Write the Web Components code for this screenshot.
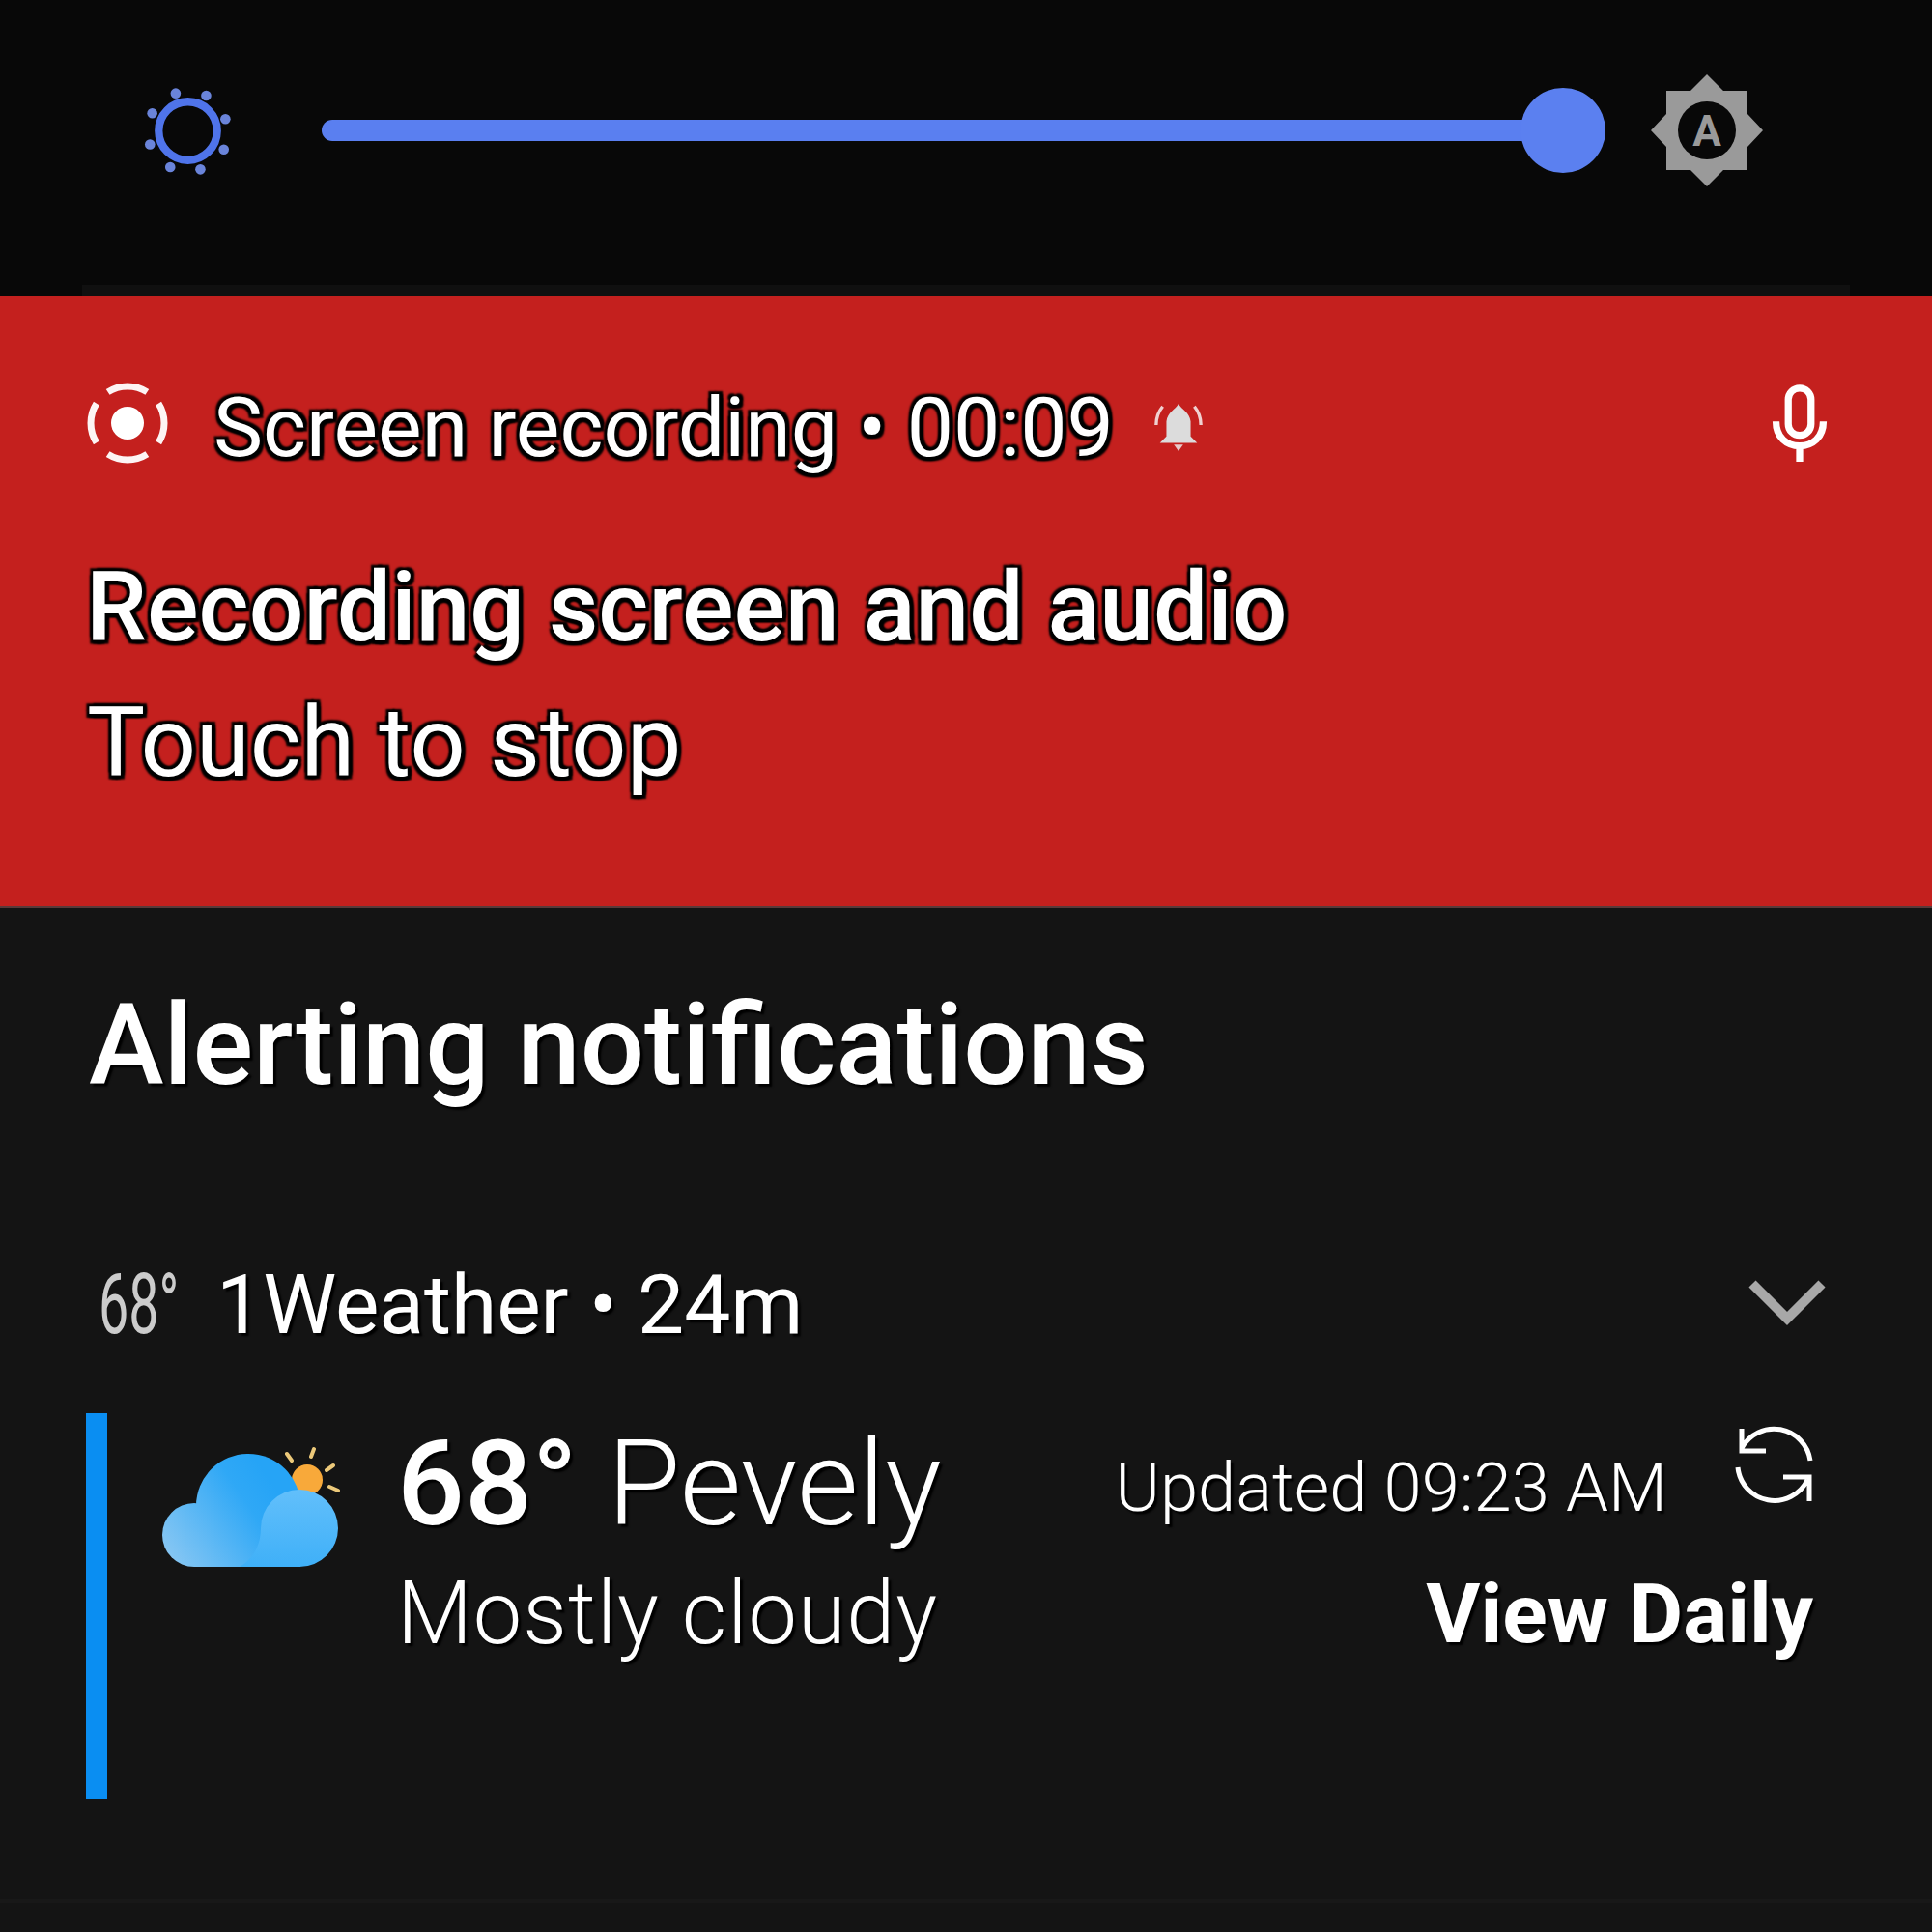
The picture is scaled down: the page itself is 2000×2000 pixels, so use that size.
<!DOCTYPE html>
<html>
<head>
<meta charset="utf-8">
<style>
    html, body { margin: 0; background: #141414; }
    body { width: 2000px; height: 2000px; overflow: hidden; font-family: Roboto, "Liberation Sans", sans-serif; color: #fff; }
</style>
</head>
<body>
<brightness-bar></brightness-bar>
<recording-card>
    <span slot="status">Screen recording • 00:09</span>
    <span slot="title">Recording screen and audio</span>
    <span slot="text">Touch to stop</span>
</recording-card>
<section-title>Alerting notifications</section-title>
<weather-card></weather-card>
<script>
class BrightnessBar extends HTMLElement {
    constructor() {
        super();
        this.attachShadow({ mode: 'open' });
        const dots = [[245,138],[340,145],[400,218],[395,313],[322,375],[228,368],[165,297],[172,200]]
            .map(d => `<circle cx="${d[0]}" cy="${d[1]}" r="16"/>`).join('');
        this.shadowRoot.innerHTML = `
            <style>
                :host { display: block; height: 306px; background: #080808; position: relative; box-sizing: border-box; padding: 91px 0 0 148px; }
                .row { display: flex; align-items: center; height: 88px; }
                .sun { width: 93px; height: 93px; flex: none; }
                .slider { width: 1329px; height: 88px; margin-left: 92px; position: relative; display: flex; align-items: center; }
                .track { width: 100%; height: 22px; border-radius: 11px; background: #5a7ff0; }
                .knob { position: absolute; right: 0; top: 0; width: 88px; height: 88px; border-radius: 50%; background: #5b80f0; }
                .auto { width: 124px; height: 124px; margin-left: 43px; flex: none; }
                .line { position: absolute; left: 85px; right: 85px; bottom: 0; height: 11px; background: #101010; }
            </style>
            <div class="row">
                <svg class="sun" viewBox="143 115 280 280">
                    <circle cx="283" cy="255" r="91" fill="none" stroke="#4f74ea" stroke-width="25"/>
                    <g fill="#6a84da">${dots}</g>
                </svg>
                <div class="slider"><div class="track"></div><div class="knob"></div></div>
                <svg class="auto" viewBox="0 0 124 124">
                    <path fill="#9a9a9a" d="M62 4 79 21H104V45L120 62 104 79V103H79L62 120 45 103H20V79L4 62 20 45V21H45Z"/>
                    <circle cx="62" cy="62" r="30" fill="#080808"/>
                    <text x="62" y="78" text-anchor="middle" font-family="Roboto" font-weight="700" font-size="44" fill="#9a9a9a">A</text>
                </svg>
            </div>
            <div class="line"></div>
        `;
    }
}

class RecordingCard extends HTMLElement {
    constructor() {
        super();
        this.attachShadow({ mode: 'open' });
        this.shadowRoot.innerHTML = `
            <style>
                :host { display: block; height: 634px; box-sizing: border-box; background: #c4201e; padding: 88px 108px 0 88px; border-bottom: 2px solid #5a3a3a;
                    text-shadow: 4px 4px 2px #000, -3px -3px 2px #000, 4px -3px 2px #000, -3px 4px 2px #000, 0 4px 2px #000, 4px 0 2px #000; }
                .head { display: flex; align-items: center; height: 88px; font-size: 86px; }
                .rec { width: 88px; height: 88px; flex: none; }
                .status { margin: 10px 0 0 45px; line-height: 88px; white-space: nowrap; }
                .bell { width: 54px; height: 56px; margin: 8px 0 0 40px; flex: none; }
                .mic { width: 58px; height: 80px; margin-left: auto; flex: none; }
                .title { font-size: 100px; font-weight: 500; line-height: 110px; margin: 92px 0 0 1px; }
                .text { font-size: 101px; line-height: 110px; margin: 30px 0 0 2px; }
            </style>
            <div class="head">
                <svg class="rec" viewBox="0 0 88 88">
                    <circle cx="44" cy="44" r="38" fill="none" stroke="#fdf4f4" stroke-width="7" pathLength="100" stroke-dasharray="18 7" stroke-dashoffset="9"/>
                    <circle cx="44" cy="44" r="17" fill="#fff"/>
                </svg>
                <span class="status"><slot name="status"></slot></span>
                <svg class="bell" viewBox="0 0 56 56">
                    <path fill="#dcdcdc" d="M28 3C31 9 40 12 41 22V38L48 45H8L15 38V22C16 12 25 9 28 3Z"/>
                    <path fill="#e8c8c8" d="M23 47H33L28 54Z"/>
                    <path fill="none" stroke="#f0d0d0" stroke-width="3.5" d="M4 26C4 17 6 12 11 6M52 26C52 17 50 12 45 6"/>
                </svg>
                <svg class="mic" viewBox="0 0 64 88">
                    <rect x="19" y="4" width="26" height="54" rx="13" fill="none" stroke="#fff" stroke-width="8"/>
                    <path fill="none" stroke="#fff" stroke-width="8" d="M5 42C5 60 17 70 32 70S59 60 59 42M32 69V88"/>
                </svg>
            </div>
            <div class="title"><slot name="title"></slot></div>
            <div class="text"><slot name="text"></slot></div>
        `;
    }
}

class SectionTitle extends HTMLElement {
    constructor() {
        super();
        this.attachShadow({ mode: 'open' });
        this.shadowRoot.innerHTML = `
            <style>
                :host { display: block; box-sizing: border-box; padding: 72px 0 0 92px; height: 360px; font-size: 117px; font-weight: 500; line-height: 140px; text-shadow: 3px 3px 2px #000; }
            </style>
            <slot></slot>
        `;
    }
}

class WeatherCard extends HTMLElement {
    constructor() {
        super();
        this.attachShadow({ mode: 'open' });
        this.shadowRoot.innerHTML = `
            <style>
                :host { display: block; padding: 0 123px 0 89px; position: relative; height: 700px; box-sizing: border-box; text-shadow: 3px 3px 2px #000; }
                .head { display: flex; align-items: center; height: 100px; font-size: 85.7px; }
                .temp { font-size: 87px; color: #ccc; width: 135px; padding-left: 13px; box-sizing: border-box; flex: none; text-shadow: none; }
                .temp span { display: inline-block; transform: scaleX(0.64); transform-origin: left; }
                .chev { width: 88px; height: 54px; margin-left: auto; margin-right: -17px; }
                .body { display: flex; margin-top: 63px; height: 399px; }
                .bar { width: 22px; height: 399px; background: #0a8ef2; flex: none; }
                .cloud { width: 200px; height: 140px; margin: 27px 0 0 49px; flex: none; }
                .main { margin-left: 51px; padding-top: 8px; }
                .big { font-size: 123px; line-height: 130px; font-weight: 300; white-space: nowrap; }
                .big b { font-weight: 500; margin-right: 31px; }
                .sub { font-size: 90px; font-weight: 300; line-height: 100px; margin-top: 20px; letter-spacing: 1px; }
                .side { margin-left: auto; display: flex; flex-direction: column; align-items: flex-end; }
                .top { display: flex; align-items: flex-start; height: 124px; }
                .upd { font-size: 70.5px; font-weight: 300; line-height: 90px; margin-top: 32px; }
                .sync { width: 100px; height: 100px; margin: 6px -14px 0 65px; }
                .view { font-size: 86px; font-weight: 700; line-height: 100px; margin-top: 34px; }
                .rule { position: absolute; left: 0; right: 0; top: 666px; height: 4px; background: #181818; }
            </style>
            <div class="head">
                <div class="temp"><span>68°</span></div>
                <span>1Weather • 24m</span>
                <svg class="chev" viewBox="0 0 88 54"><path fill="none" stroke="#a8a8a8" stroke-width="10" d="M8 6 44 42 80 6"/></svg>
            </div>
            <div class="body">
                <div class="bar"></div>
                <svg class="cloud" viewBox="0 0 200 140">
                    <defs>
                        <linearGradient id="a" gradientUnits="userSpaceOnUse" x1="15" y1="125" x2="125" y2="50"><stop offset="0" stop-color="#88c7f3"/><stop offset="0.75" stop-color="#2fa8f6"/><stop offset="1" stop-color="#26a4f6"/></linearGradient>
                        <linearGradient id="b" x1="0" y1="0" x2="0" y2="1"><stop offset="0" stop-color="#62bffb"/><stop offset="1" stop-color="#3fb0f8"/></linearGradient>
                    </defs>
                    <g stroke="#ecc97a" stroke-width="4" stroke-linecap="round">
                        <path d="M137 15 142 22M165 10 162 18M185 27 178 32M190 53 181 49"/>
                    </g>
                    <circle cx="158" cy="42" r="16" fill="#f8a93a"/>
                    <g fill="url(#a)">
                        <circle cx="41" cy="99" r="33"/>
                        <circle cx="97" cy="69" r="54"/>
                        <rect x="41" y="80" width="110" height="52"/>
                    </g>
                    <path fill="url(#b)" d="M88 132C102 124 110 110 110 92A40 40 0 1 1 150 132Z"/>
                </svg>
                <div class="main">
                    <div class="big"><b>68°</b>Pevely</div>
                    <div class="sub">Mostly cloudy</div>
                </div>
                <div class="side">
                    <div class="top">
                        <span class="upd">Updated 09:23 AM</span>
                        <svg class="sync" viewBox="0 0 100 100">
                            <g fill="none" stroke="#fff" stroke-width="5">
                                <path d="M12 30A38 38 0 0 1 83 43M12 10V33H37"/>
                                <path d="M8 50A38 38 0 0 0 80 63M55 60H82V85"/>
                            </g>
                        </svg>
                    </div>
                    <div class="view">View Daily</div>
                </div>
            </div>
            <div class="rule"></div>
        `;
    }
}

customElements.define('brightness-bar', BrightnessBar);
customElements.define('recording-card', RecordingCard);
customElements.define('section-title', SectionTitle);
customElements.define('weather-card', WeatherCard);
</script>
</body>
</html>
